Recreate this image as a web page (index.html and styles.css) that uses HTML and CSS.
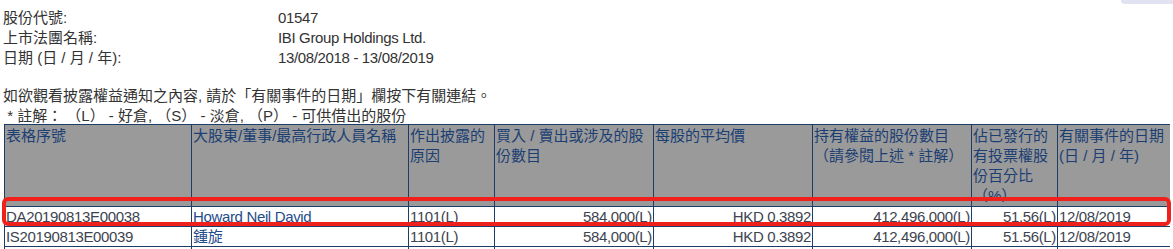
FILE: index.html
```html
<!DOCTYPE html>
<html lang="zh-Hant">
<head>
<meta charset="utf-8">
<title>披露權益</title>
<link rel="stylesheet" href="styles.css">
</head>
<body>
<div class="corner-tab"></div>
<div class="info">
  <div class="info-label">股份代號:</div><div class="info-value">01547</div>
  <div class="info-label">上市法團名稱:</div><div class="info-value">IBI Group Holdings Ltd.</div>
  <div class="info-label">日期 (日 / 月 / 年):</div><div class="info-value">13/08/2018 - 13/08/2019</div>
</div>
<div class="notes">
  <div class="note-main">如欲觀看披露權益通知之內容, 請於「有關事件的日期」欄按下有關連結。</div>
  <div class="note-legend">&nbsp;* 註解： （L） - 好倉, （S） - 淡倉, （P） - 可供借出的股份</div>
</div>
<table class="disclosures">
  <colgroup>
    <col class="c1"><col class="c2"><col class="c3"><col class="c4">
    <col class="c5"><col class="c6"><col class="c7"><col class="c8">
  </colgroup>
  <thead>
    <tr>
      <th><div class="hc">表格序號</div></th>
      <th><div class="hc">大股東/董事/最高行政人員名稱</div></th>
      <th><div class="hc">作出披露的原因</div></th>
      <th><div class="hc">買入 / 賣出或涉及的股份數目</div></th>
      <th><div class="hc">每股的平均價</div></th>
      <th><div class="hc">持有權益的股份數目（請參閱上述 * 註解）</div></th>
      <th><div class="hc">佔已發行的有投票權股份百分比（%）</div></th>
      <th><div class="hc">有關事件的日期 (日 / 月 / 年)</div></th>
    </tr>
  </thead>
  <tbody>
    <tr>
      <td><div class="dc">DA20190813E00038</div></td>
      <td><div class="dc name">Howard Neil David</div></td>
      <td><div class="dc">1101(L)</div></td>
      <td><div class="dc num">584,000(L)</div></td>
      <td><div class="dc num">HKD 0.3892</div></td>
      <td><div class="dc num">412,496,000(L)</div></td>
      <td><div class="dc num">51.56(L)</div></td>
      <td><div class="dc">12/08/2019</div></td>
    </tr>
    <tr>
      <td><div class="dc">IS20190813E00039</div></td>
      <td><div class="dc name">鍾旋</div></td>
      <td><div class="dc">1101(L)</div></td>
      <td><div class="dc num">584,000(L)</div></td>
      <td><div class="dc num">HKD 0.3892</div></td>
      <td><div class="dc num">412,496,000(L)</div></td>
      <td><div class="dc num">51.56(L)</div></td>
      <td><div class="dc">12/08/2019</div></td>
    </tr>
    <tr>
      <td><div class="dc"></div></td><td><div class="dc"></div></td>
      <td><div class="dc"></div></td><td><div class="dc"></div></td>
      <td><div class="dc"></div></td><td><div class="dc"></div></td>
      <td><div class="dc"></div></td><td><div class="dc"></div></td>
    </tr>
  </tbody>
</table>
<div class="highlight"></div>
</body>
</html>
```

FILE: styles.css
```css
html {
  height: 249px;
  overflow: hidden;
  background: #ffffff;
}

body {
  margin: 8px 3px 0 3px;
  font-family: "Liberation Sans", "Noto Sans CJK TC", sans-serif;
  font-size: 15px;
  line-height: 20px;
  color: #333333;
}

.corner-tab {
  position: absolute;
  top: 0;
  right: 0;
  width: 52px;
  height: 4px;
  background: #e2e2f2;
  border-bottom-left-radius: 4px;
}

.info {
  display: grid;
  grid-template-columns: 275px auto;
  grid-auto-rows: 20px;
}

.info-value {
  letter-spacing: -0.35px;
}

.notes {
  margin-top: 18px;
}

.note-main {
  height: 20px;
}

.note-legend {
  height: 18px;
}

.disclosures {
  margin-left: 1px;
  border-collapse: collapse;
  table-layout: fixed;
  width: 1167px;
}

.c1 { width: 187px; }
.c2 { width: 217px; }
.c3 { width: 86px; }
.c4 { width: 159px; }
.c5 { width: 159px; }
.c6 { width: 159px; }
.c7 { width: 86px; }
.c8 { width: 114px; }

.disclosures th,
.disclosures td {
  border: 1px solid #1d3d66;
  padding: 0 1px;
  text-align: left;
  vertical-align: top;
}

.disclosures th {
  background: #9a9a9a;
  color: #1b3f73;
  font-weight: normal;
}

.hc {
  height: 81px;
  padding-top: 1px;
  box-sizing: border-box;
  line-height: 20px;
}

.dc {
  height: 19px;
  line-height: 19px;
  color: #3d4450;
  letter-spacing: -0.35px;
  white-space: nowrap;
  overflow: hidden;
}

.dc.num {
  text-align: right;
}

.dc.name {
  color: #1f4c8a;
}

.highlight {
  position: absolute;
  left: 2px;
  top: 197px;
  width: 1161px;
  height: 21px;
  border: 4px solid #f0211d;
  border-radius: 6px;
  pointer-events: none;
}
```
